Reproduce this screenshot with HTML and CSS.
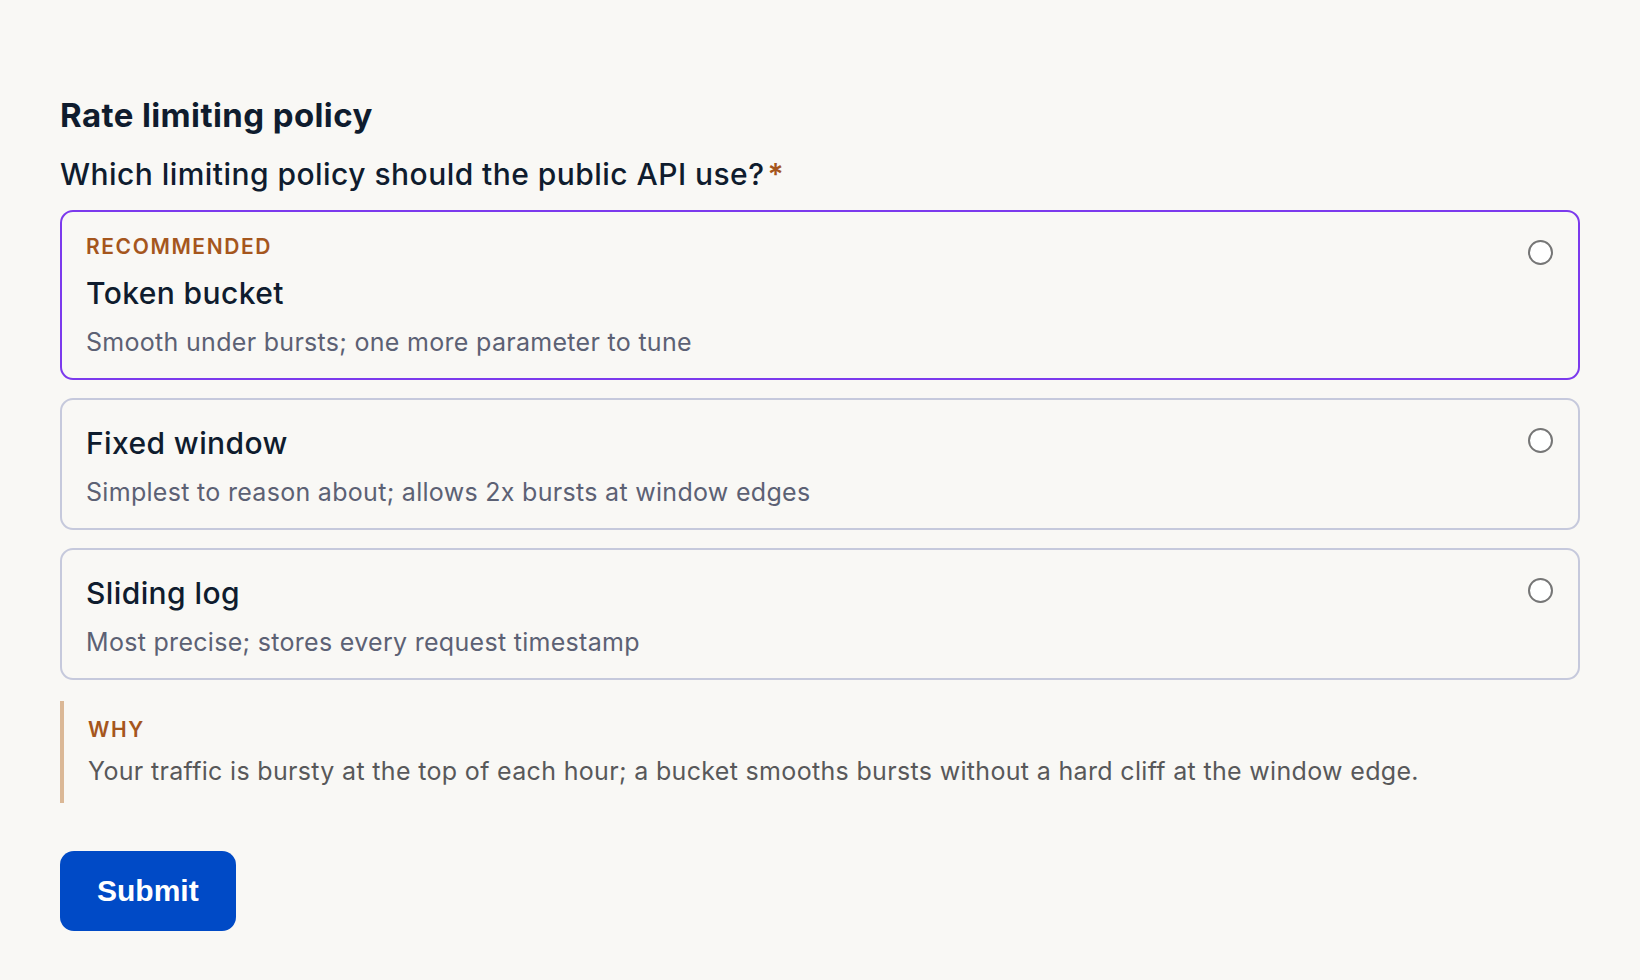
FILE: index.html
```html
<!DOCTYPE html>
<html lang="en">
<head>
<meta charset="utf-8">
<title>Rate limiting policy</title>
<link rel="stylesheet" href="styles.css">
</head>
<body>
<main class="page">
  <h1 class="title">Rate limiting policy</h1>
  <form class="form">
    <fieldset class="question">
      <legend class="prompt">Which limiting policy should the public API use?<span class="req">*</span></legend>
      <div class="options">
        <label class="option option-recommended">
          <span class="option-body">
            <span class="badge">RECOMMENDED</span>
            <span class="option-title">Token bucket</span>
            <span class="option-desc">Smooth under bursts; one more parameter to tune</span>
          </span>
          <input class="radio" type="radio" name="policy" value="token">
        </label>
        <label class="option">
          <span class="option-body">
            <span class="option-title">Fixed window</span>
            <span class="option-desc">Simplest to reason about; allows 2x bursts at window edges</span>
          </span>
          <input class="radio" type="radio" name="policy" value="fixed">
        </label>
        <label class="option">
          <span class="option-body">
            <span class="option-title">Sliding log</span>
            <span class="option-desc">Most precise; stores every request timestamp</span>
          </span>
          <input class="radio" type="radio" name="policy" value="sliding">
        </label>
      </div>
    </fieldset>
    <aside class="why">
      <div class="why-label">WHY</div>
      <p class="why-text">Your traffic is bursty at the top of each hour; a bucket smooths bursts without a hard cliff at the window edge.</p>
    </aside>
    <button class="submit" type="button">Submit</button>
  </form>
</main>
</body>
</html>
```

FILE: styles.css
```css
* { box-sizing: border-box; }

html, body {
  margin: 0;
  padding: 0;
  background: #f9f8f5;
}

body {
  font-family: Inter, "Noto Sans", "Liberation Sans", sans-serif;
  color: #0f1c2e;
}

.page {
  padding: 95px 60px 40px 60px;
}

.title {
  margin: 0;
  font-size: 33px;
  line-height: 40px;
  font-weight: 700;
  letter-spacing: 0.4px;
  color: #0f1c2e;
}

.form {
  display: flex;
  flex-direction: column;
  align-items: flex-start;
}

.question {
  border: 0;
  margin: 20px 0 0 0;
  padding: 0;
  min-width: 0;
  width: 100%;
}

.prompt {
  padding: 0;
  margin: 0 0 17px 0;
  font-size: 30px;
  line-height: 38px;
  font-weight: 500;
  letter-spacing: 0.45px;
  color: #0f1c2e;
  float: left;
  width: 100%;
}

.req {
  color: #a5551c;
  margin-left: 3px;
  font-weight: 600;
}

.options {
  clear: both;
  display: flex;
  flex-direction: column;
  gap: 18px;
}

.option {
  display: flex;
  align-items: flex-start;
  gap: 16px;
  border: 2px solid #c6c9dc;
  border-radius: 13px;
  padding: 24px 25px 20px 24px;
  cursor: pointer;
}

.option-recommended {
  border-color: #7c3aed;
}

.option-body {
  flex: 1;
  display: flex;
  flex-direction: column;
}

.badge {
  font-size: 21px;
  line-height: 22px;
  font-weight: 600;
  letter-spacing: 1.6px;
  color: #a5561d;
  margin-bottom: 16px;
}

.option-title {
  font-size: 30px;
  line-height: 39px;
  font-weight: 500;
  letter-spacing: 0.4px;
  color: #0f1c2e;
}

.option-desc {
  margin-top: 13px;
  font-size: 25px;
  line-height: 32px;
  font-weight: 400;
  letter-spacing: 0.3px;
  color: #5c6174;
}

.radio {
  appearance: none;
  -webkit-appearance: none;
  flex: none;
  width: 25px;
  height: 25px;
  margin: 4px 0 0 0;
  border: 2px solid #767676;
  border-radius: 50%;
  background: #ffffff;
}

.why {
  margin-top: 21px;
  border-left: 4px solid #dbb896;
  padding: 18px 0 13px 24px;
}

.why-label {
  font-size: 21px;
  line-height: 22px;
  font-weight: 600;
  letter-spacing: 1.6px;
  color: #a5561d;
}

.why-text {
  margin: 12px 0 0 0;
  font-size: 25px;
  line-height: 37px;
  letter-spacing: 0.33px;
  color: #58585a;
}

.submit {
  margin-top: 48px;
  border: 0;
  border-radius: 14px;
  background: #004ac6;
  color: #ffffff;
  font-family: "Liberation Sans", Arial, sans-serif;
  font-weight: 700;
  font-size: 30px;
  line-height: 36px;
  padding: 22px 37px;
  cursor: pointer;
}
```
